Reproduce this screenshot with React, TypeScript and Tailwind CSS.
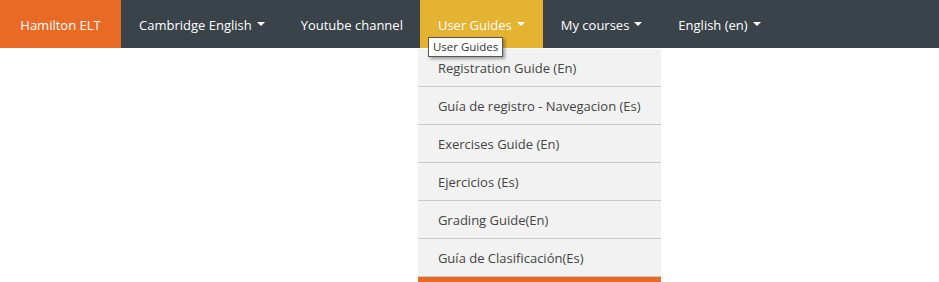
import React from "react";

const Caret = () => (
  <span className="ml-[5px] inline-block w-0 h-0 border-l-[4px] border-r-[4px] border-t-[4px] border-l-transparent border-r-transparent border-t-white align-middle relative top-[-1px]" />
);

export default function App() {
  const items = [
    "Registration Guide (En)",
    "Guía de registro - Navegacion (Es)",
    "Exercises Guide (En)",
    "Ejercicios (Es)",
    "Grading Guide(En)",
    "Guía de Clasificación(Es)",
  ];
  return (
    <div className="w-[939px] h-[282px] bg-white overflow-hidden" style={{ fontFamily: '"Open Sans", sans-serif' }}>
      <nav className="flex h-[48px] bg-[#3a424a] text-white text-[13px] leading-[18px]">
        <div className="flex items-center w-[121px] justify-center bg-[#e86a25] pt-[1px]">Hamilton ELT</div>
        <div className="flex items-center px-[18px] pt-[1px]">Cambridge English<Caret /></div>
        <div className="flex items-center pl-[18px] pr-[17px] pt-[1px]">Youtube channel</div>
        <div className="relative flex items-center px-[18px] bg-[#e4b332] pt-[1px]">
          User Guides<Caret />
          <div className="absolute left-[-2px] top-[49px] w-[243px] bg-[#f2f2f2] text-[#444] z-10">
            {items.map((t) => (
              <div key={t} className="h-[38px] flex items-center pl-[20px] border-b border-[#c8c8c8]">
                {t}
              </div>
            ))}
            <div className="h-[6px] bg-[#e86a25]" />
          </div>
          <div className="absolute left-[8px] top-[37px] z-20 bg-white border border-[#555] text-[#333] text-[11.5px] leading-[18px] px-[4px] shadow-[2px_2px_3px_rgba(0,0,0,0.35)]">
            User Guides
          </div>
        </div>
        <div className="flex items-center px-[18px] pt-[1px]">My courses<Caret /></div>
        <div className="flex items-center px-[18px] pt-[1px]">English (en)<Caret /></div>
      </nav>
    </div>
  );
}
